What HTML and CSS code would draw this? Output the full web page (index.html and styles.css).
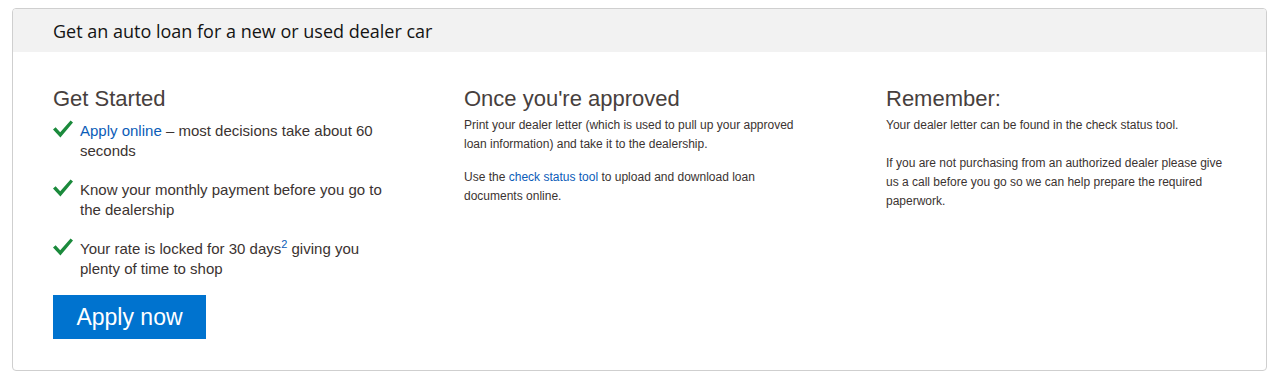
FILE: index.html
```html
<!DOCTYPE html>
<html lang="en">
<head>
    <meta charset="UTF-8">
    <title>Auto Loan</title>
    <link rel="stylesheet" href="styles.css">
</head>
<body>
    <div class="panel">
        <div class="panel-header">
            <h2>Get an auto loan for a new or used dealer car</h2>
        </div>
        <div class="panel-body">
            <div class="col">
                <h3>Get Started</h3>
                <ul class="checks">
                    <li>
                        <svg class="check" viewBox="0 0 20 18"><path d="M0 9.5 L2.6 7.3 L7.2 12.2 L17.6 0.6 L20 2.6 L7.4 17.4 Z" fill="#1b8a3c"/></svg>
                        <span><a href="#">Apply online</a> &ndash; most decisions take about 60 seconds</span>
                    </li>
                    <li>
                        <svg class="check" viewBox="0 0 20 18"><path d="M0 9.5 L2.6 7.3 L7.2 12.2 L17.6 0.6 L20 2.6 L7.4 17.4 Z" fill="#1b8a3c"/></svg>
                        <span>Know your monthly payment before you go to the dealership</span>
                    </li>
                    <li>
                        <svg class="check" viewBox="0 0 20 18"><path d="M0 9.5 L2.6 7.3 L7.2 12.2 L17.6 0.6 L20 2.6 L7.4 17.4 Z" fill="#1b8a3c"/></svg>
                        <span>Your rate is locked for 30 days<sup><a href="#">2</a></sup> giving you plenty of time to shop</span>
                    </li>
                </ul>
                <a class="btn" href="#">Apply now</a>
            </div>
            <div class="col">
                <h3>Once you're approved</h3>
                <p>Print your dealer letter (which is used to pull up your approved loan information) and take it to the dealership.</p>
                <p>Use the <a href="#">check status tool</a> to upload and download loan documents online.</p>
            </div>
            <div class="col">
                <h3>Remember:</h3>
                <p>Your dealer letter can be found in the check status tool.<br><br>If you are not purchasing from an authorized dealer please give us a call before you go so we can help prepare the required paperwork.</p>
            </div>
        </div>
    </div>
</body>
</html>
```

FILE: styles.css
```css
body {
    margin: 0;
    padding: 8px 8px 0 12px;
    font-family: "Liberation Sans", Arial, sans-serif;
    color: #3b3331;
    background: #fff;
}
.panel {
    width: 1253px;
    border: 1px solid #cfcfcf;
    border-radius: 4px;
    overflow: hidden;
}
.panel-header {
    background: #f2f2f2;
    height: 43px;
    padding: 0 40px;
    display: flex;
    align-items: center;
}
.panel-header h2 {
    margin: 0;
    font-family: "Open Sans", sans-serif;
    font-weight: normal;
    font-size: 18px;
    color: #141414;
}
.panel-body {
    display: grid;
    grid-template-columns: 411px 422px 1fr;
    padding: 34px 40px 30px;
    height: 254px;
}
h3 {
    margin: 0 0 4px;
    font-weight: normal;
    font-size: 22px;
    line-height: 26px;
    color: #47403d;
}
a {
    color: #0b5cb8;
    text-decoration: none;
}
.checks {
    list-style: none;
    margin: 9px 0 0;
    padding: 0;
    width: 340px;
}
.checks li {
    display: flex;
    gap: 7px;
    font-size: 15px;
    line-height: 20px;
    margin-bottom: 19px;
}
.checks li:last-child {
    margin-bottom: 16px;
}
.check {
    width: 20px;
    height: 18px;
    flex: none;
    margin-top: -1px;
}
sup {
    font-size: 11px;
    line-height: 0;
    vertical-align: 6px;
}
.btn {
    display: inline-flex;
    align-items: center;
    justify-content: center;
    width: 153px;
    height: 44px;
    background: #0073cf;
    color: #fff;
    font-size: 23px;
}
.col p {
    margin: 0 0 14px;
    font-size: 12px;
    line-height: 19px;
    width: 345px;
}
```
